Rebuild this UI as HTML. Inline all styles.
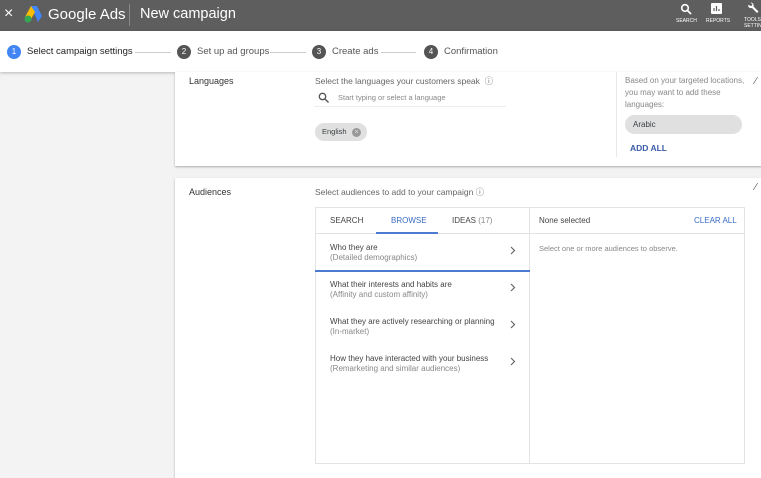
<!DOCTYPE html>
<html><head><style>
*{margin:0;padding:0;box-sizing:border-box}
body{width:761px;height:467px;overflow:hidden;background:#f3f3f3;font-family:"Liberation Sans",Arial,sans-serif;position:relative;color:#3c4043}
.abs{position:absolute}
.hdr{left:0;top:0;width:761px;height:31px;background:#5e5e5e}
.steps{left:0;top:31px;width:761px;height:41px;background:#fff;box-shadow:0 1px 3px rgba(0,0,0,.25)}
.circ{width:14px;height:14px;border-radius:50%;color:#fff;font-size:8px;text-align:center;line-height:14px;background:#555}
.st{font-size:9.5px;color:#555}
.line{height:1px;background:#ccc}
.card{background:#fff;box-shadow:0 1px 2px rgba(0,0,0,.3)}
.s{font-size:8.5px;color:#666}
.gray{color:#888}
.item{position:absolute;left:15px;font-size:8px;color:#444;line-height:10px}
.item span{color:#888}
.chev{position:absolute;left:195px}
</style></head><body>
<div class="abs hdr"></div>
<div class="abs" style="left:4px;top:5px;color:#fff;font-size:16px">×</div>
<svg class="abs" style="left:23px;top:5px" width="20" height="18" viewBox="0 0 20 18"><path d="M8 1 L14 1 L19 11 L15 17 Z" fill="#4285f4"/><path d="M8 1 L2 12 L7 16 L12 7Z" fill="#fbbc04"/><circle cx="5" cy="14" r="3.5" fill="#34a853"/></svg>
<div class="abs" style="left:48px;top:6px;color:#fff;font-size:15px">Google Ads</div>
<div class="abs" style="left:129px;top:4px;width:1px;height:22px;background:#888"></div>
<div class="abs" style="left:140px;top:6px;color:#fff;font-size:14.5px">New campaign</div>
<svg class="abs" style="left:680px;top:3px" width="12" height="12" viewBox="0 0 12 12"><circle cx="5" cy="5" r="3.3" stroke="#fff" stroke-width="1.6" fill="none"/><path d="M7.5 7.5L11 11" stroke="#fff" stroke-width="1.8"/></svg>
<div class="abs" style="left:676px;top:18px;color:#fff;font-size:5px">SEARCH</div>
<svg class="abs" style="left:711px;top:3px" width="11" height="11"><rect width="11" height="11" rx="1" fill="#fff"/><path d="M3 8V5M5.5 8V3M8 8V6" stroke="#5e5e5e" stroke-width="1.2"/></svg>
<div class="abs" style="left:706px;top:18px;color:#fff;font-size:5px">REPORTS</div>
<svg class="abs" style="left:746px;top:2px" width="13" height="13" viewBox="0 0 13 13"><path d="M2 3a3 3 0 0 0 4 3l5 5 1.5-1.5-5-5a3 3 0 0 0-3-4l2 2-1 1.5z" fill="#fff"/></svg>
<div class="abs" style="left:744px;top:17px;color:#fff;font-size:5px;line-height:6px">TOOLS<br>SETTIN</div>
<div class="abs steps"></div>
<div class="abs circ" style="left:7px;top:45px;background:#4285f4">1</div>
<div class="abs st" style="left:27px;top:46px;color:#222">Select campaign settings</div>
<div class="abs line" style="left:135px;top:52px;width:36px"></div>
<div class="abs circ" style="left:177px;top:45px">2</div>
<div class="abs st" style="left:197px;top:46px">Set up ad groups</div>
<div class="abs line" style="left:270px;top:52px;width:36px"></div>
<div class="abs circ" style="left:312px;top:45px">3</div>
<div class="abs st" style="left:332px;top:46px">Create ads</div>
<div class="abs line" style="left:381px;top:52px;width:35px"></div>
<div class="abs circ" style="left:424px;top:45px">4</div>
<div class="abs st" style="left:444px;top:46px">Confirmation</div>

<div class="abs card" style="left:175px;top:72px;width:590px;height:94px"></div>
<div class="abs s" style="left:189px;top:76px;color:#333;font-size:9px">Languages</div>
<div class="abs s" style="left:315px;top:75px">Select the languages your customers speak&nbsp; ⓘ</div>
<svg class="abs" style="left:318px;top:92px" width="11" height="11"><circle cx="4.5" cy="4.5" r="3.2" stroke="#555" stroke-width="1.3" fill="none"/><path d="M7 7l3.5 3.5" stroke="#555" stroke-width="1.4"/></svg>
<div class="abs gray" style="left:338px;top:93px;font-size:7.5px">Start typing or select a language</div>
<div class="abs" style="left:314px;top:106px;width:192px;height:1px;background:#eee"></div>
<div class="abs" style="left:315px;top:123px;width:52px;height:18px;border-radius:9px;background:#e0e0e0;font-size:7.5px;padding:4px 0 0 7px">English</div>
<div class="abs" style="left:352px;top:128px;width:9px;height:9px;border-radius:50%;background:#999;color:#e0e0e0;font-size:7px;line-height:9px;text-align:center">×</div>
<div class="abs" style="left:616px;top:72px;width:1px;height:85px;background:#e8e8e8"></div>
<div class="abs gray" style="left:625px;top:75px;font-size:8px;line-height:12px;width:125px">Based on your targeted locations, you may want to add these languages:</div>
<div class="abs" style="left:625px;top:115px;width:117px;height:19px;border-radius:10px;background:#e0e0e0;font-size:8px;padding:5px 0 0 8px">Arabic</div>
<div class="abs" style="left:630px;top:143px;font-size:8.5px;color:#3a5ba8;font-weight:bold">ADD ALL</div>
<div class="abs" style="left:755px;top:76px;font-size:10px;color:#555">⁄</div>

<div class="abs card" style="left:175px;top:178px;width:590px;height:300px"></div>
<div class="abs s" style="left:189px;top:187px;color:#333;font-size:9px">Audiences</div>
<div class="abs s" style="left:315px;top:186px">Select audiences to add to your campaign ⓘ</div>
<div class="abs" style="left:315px;top:207px;width:430px;height:257px;border:1px solid #e3e3e3"></div>
<div class="abs" style="left:529px;top:207px;width:1px;height:257px;background:#e3e3e3"></div>
<div class="abs" style="left:315px;top:233px;width:215px;height:1px;background:#e3e3e3"></div>
<div class="abs" style="left:530px;top:233px;width:215px;height:1px;background:#e3e3e3"></div>
<div class="abs" style="left:330px;top:216px;font-size:8px;color:#444">SEARCH</div>
<div class="abs" style="left:391px;top:216px;font-size:8px;color:#3a6bc4">BROWSE</div>
<div class="abs" style="left:376px;top:232px;width:62px;height:2px;background:#4a7bd0"></div>
<div class="abs" style="left:452px;top:216px;font-size:8px;color:#444">IDEAS <span style="color:#888">(17)</span></div>
<div class="abs" style="left:539px;top:216px;font-size:8px;color:#444">None selected</div>
<div class="abs" style="left:694px;top:216px;font-size:8px;color:#3a6bc4">CLEAR ALL</div>
<div class="abs gray" style="left:539px;top:244px;font-size:7.5px">Select one or more audiences to observe.</div>
<div class="abs" style="left:315px;top:233px;width:215px;height:40px">
<div class="item" style="top:10px">Who they are<br><span>(Detailed demographics)</span></div><svg class="chev" style="top:13px" width="6" height="9"><path d="M1 1l3.5 3.5L1 8" stroke="#666" stroke-width="1.2" fill="none"/></svg></div>
<div class="abs" style="left:315px;top:270px;width:215px;height:2px;background:#4a7bd0"></div>
<div class="abs" style="left:315px;top:270px;width:215px;height:40px">
<div class="item" style="top:10px">What their interests and habits are<br><span>(Affinity and custom affinity)</span></div><svg class="chev" style="top:13px" width="6" height="9"><path d="M1 1l3.5 3.5L1 8" stroke="#666" stroke-width="1.2" fill="none"/></svg></div>
<div class="abs" style="left:315px;top:307px;width:215px;height:40px">
<div class="item" style="top:10px">What they are actively researching or planning<br><span>(In-market)</span></div><svg class="chev" style="top:13px" width="6" height="9"><path d="M1 1l3.5 3.5L1 8" stroke="#666" stroke-width="1.2" fill="none"/></svg></div>
<div class="abs" style="left:315px;top:344px;width:215px;height:40px">
<div class="item" style="top:10px">How they have interacted with your business<br><span>(Remarketing and similar audiences)</span></div><svg class="chev" style="top:13px" width="6" height="9"><path d="M1 1l3.5 3.5L1 8" stroke="#666" stroke-width="1.2" fill="none"/></svg></div>
<div class="abs" style="left:755px;top:182px;font-size:10px;color:#555">⁄</div>
</body></html>
